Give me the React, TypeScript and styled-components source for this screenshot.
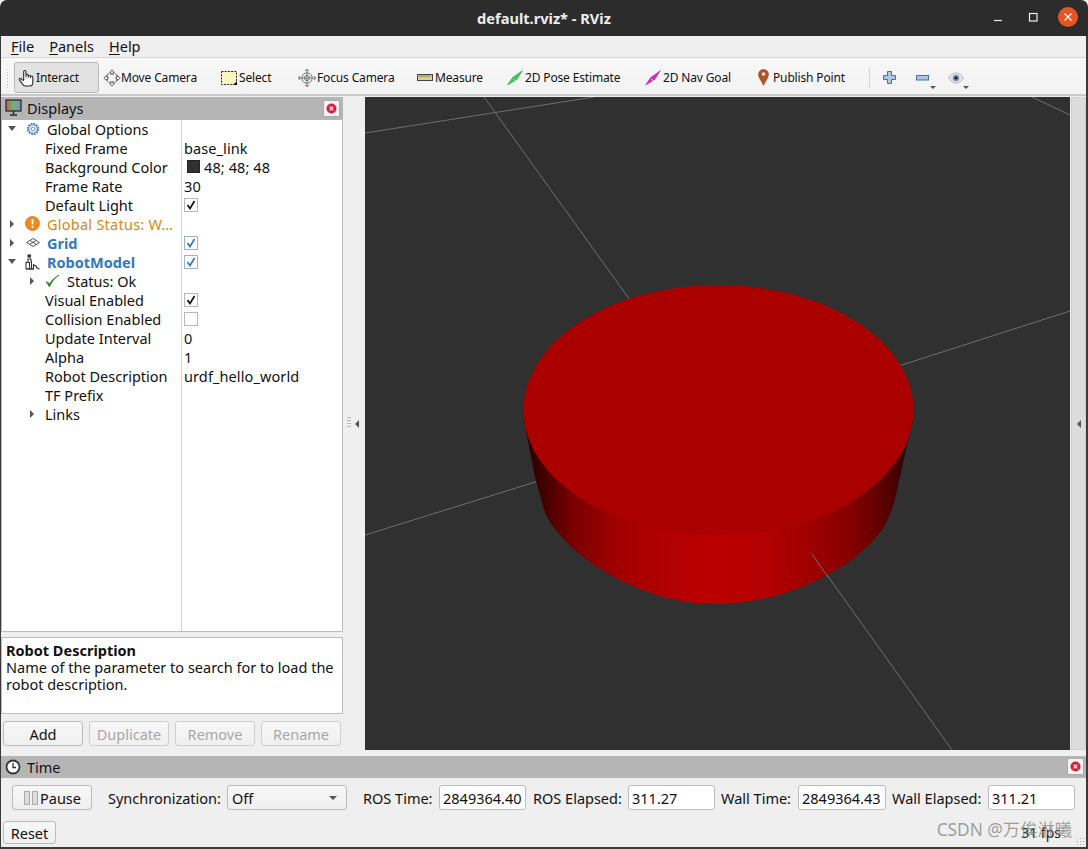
import React from "react";
import styled, { createGlobalStyle } from "styled-components";

const FONT = `"Noto Sans", "Noto Sans CJK SC", sans-serif`;

const Global = createGlobalStyle`
  html, body { margin: 0; padding: 0; background: #fff; overflow: hidden; }
  * { box-sizing: border-box; }
`;

const Win = styled.div`
  width: 1088px; height: 849px; display: flex; flex-direction: column;
  font-family: ${FONT}; font-size: 14.5px; color: #111; background: #efefef;
  position: relative; overflow: hidden;
`;
const TitleBar = styled.div`
  height: 36px; background: #2c2c2c; border-radius: 7px 7px 0 0; color: #eee;
  display: flex; align-items: center; justify-content: center; position: relative;
  font-weight: 700; font-size: 14.6px; flex: none;
`;
const WinButtons = styled.div`
  position: absolute; right: 10px; top: 7px; display: flex; align-items: center; gap: 15px;
`;
const WinBtn = styled.div`
  width: 20px; height: 20px; display: flex; align-items: center; justify-content: center;
`;
const Close = styled(WinBtn)`
  background: #e95420; border-radius: 50%;
`;
const Frame = styled.div`
  flex: 1; display: flex; flex-direction: column; min-height: 0;
  border-left: 1px solid #3a3a3a; border-right: 2px solid #3a3a3a; border-bottom: 2px solid #3a3a3a;
`;
const MenuBar = styled.div`
  height: 21px; display: flex; align-items: center; gap: 15px; padding: 0 0 1px 10px;
  background: #efefef; font-size: 14.5px; flex: none;
`;
const MenuItem = styled.span`
  u { text-decoration-thickness: 1px; text-underline-offset: 2px; }
`;
const ToolBar = styled.div`
  height: 39px; display: flex; align-items: center; flex: none; margin-bottom: 1px;
  background: linear-gradient(#f8f8f8, #f3f3f3);
  border-top: 1px solid #d6d6d6; border-bottom: 2px solid #c9c9c9;
  padding: 3px 0 0 5px; font-size: 12px;
`;
const Grip = styled.div`
  width: 4px; height: 20px; margin-right: 4px;
  background-image: radial-gradient(#bbb 0.7px, transparent 0.8px);
  background-size: 3px 3px;
`;
const Tool = styled.div<{ $w: number; $gap: number; $active?: boolean }>`
  width: ${(p) => p.$w}px; height: 31px; display: flex; align-items: center; gap: ${(p) => p.$gap}px;
  padding-left: 3px; white-space: nowrap; border-radius: 3px; letter-spacing: -0.15px;
  border: 1px solid ${(p) => (p.$active ? "#b9b9b9" : "transparent")};
  background: ${(p) => (p.$active ? "#e2e2e2" : "transparent")};
  svg { flex: none; }
`;
const ToolSep = styled.div`
  width: 1px; height: 20px; background: #d5d5d5; margin: 0 13px 0 0;
`;
const IconTool = styled.div<{ $w: number }>`
  width: ${(p) => p.$w}px; height: 31px; display: flex; align-items: center; padding-left: 0; position: relative;
`;
const Drop = styled.span`
  position: absolute; right: 12px; bottom: 4px; width: 0; height: 0;
  border-left: 3px solid transparent; border-right: 3px solid transparent; border-top: 3px solid #555;
`;
const EyeDrop = styled(Drop)`
  right: 7px;
`;
const Middle = styled.div`
  flex: none; height: 653px; display: flex;
`;
const LeftCol = styled.div`
  width: 342px; display: flex; flex-direction: column; flex: none; padding-bottom: 4px;
`;
const DockHeader = styled.div`
  height: 23px; background: #b5b5b5; display: flex; align-items: center; flex: none;
  padding: 0 3px 1px 4px; gap: 4px; font-size: 14.5px;
`;
const DockTitle = styled.span`
  flex: 1;
`;
const DockClose = styled.div`
  width: 17px; height: 17px; background: #f4f4f4; border: 1px solid #aaa; border-radius: 2px;
  display: flex; align-items: center; justify-content: center;
`;
const Tree = styled.div`
  flex: 1; min-height: 0; background: #fff; border: 1px solid #bdbdbd; border-top: 0; position: relative;
`;
const ColLine = styled.div`
  position: absolute; left: 179px; top: 0; bottom: 0; width: 1px; background: #d4d4d4;
`;
const Row = styled.div`
  height: 19px; display: flex; align-items: center; position: relative; white-space: nowrap; padding-bottom: 2px;
`;
const NameCell = styled.div<{ $indent: number }>`
  width: 180px; flex: none; display: flex; align-items: center; padding-left: ${(p) => p.$indent}px;
  overflow: hidden;
`;
const ValueCell = styled.div`
  flex: 1; display: flex; align-items: center; padding-left: 2px; gap: 4px; letter-spacing: 0.1px;
`;
const Expander = styled.span<{ $open?: boolean; $x: number }>`
  position: absolute; left: ${(p) => p.$x}px; top: 5px; width: 0; height: 0;
  ${(p) =>
    p.$open
      ? "border-left: 4px solid transparent; border-right: 4px solid transparent; border-top: 5px solid #555; margin-top: 1px;"
      : "border-top: 4px solid transparent; border-bottom: 4px solid transparent; border-left: 4px solid #555;"}
`;
const IconSlot = styled.span<{ $x: number }>`
  position: absolute; left: ${(p) => p.$x}px; top: 0; width: 17px; height: 17px;
  display: flex; align-items: center; justify-content: center;
`;
const Name = styled.span<{ $tone?: string }>`
  color: ${(p) => (p.$tone === "warn" ? "#d58a12" : p.$tone === "blue" ? "#2f78c4" : "#111")};
  font-weight: ${(p) => (p.$tone === "blue" ? 700 : 400)};
  letter-spacing: ${(p) => (p.$tone === "warn" ? "0.25px" : "0")};
`;
const Check = styled.span<{ $blue?: boolean }>`
  width: 14px; height: 14px; border: 1px solid #b8b8b8; background: #fff; display: flex;
  align-items: center; justify-content: center;
  border-color: ${(p) => (p.$blue ? "#9db4cc" : "#b8b8b8")};
`;
const Swatch = styled.span`
  width: 13px; height: 13px; background: #303030; border: 1px solid #222; margin-left: 3px;
`;
const Dots = styled.div`
  height: 5px; display: flex; justify-content: center; align-items: center; flex: none;
  &::before {
    content: ""; width: 16px; height: 2px;
    background-image: radial-gradient(#b5b5b5 0.6px, transparent 0.7px); background-size: 3px 2px;
  }
`;
const Desc = styled.div`
  height: 77px; background: #fff; border: 1px solid #bdbdbd; padding: 4px 4px; line-height: 17px;
  font-size: 14.5px; flex: none;
`;
const DescTitle = styled.div`
  font-weight: 700;
`;
const BtnRow = styled.div`
  display: flex; gap: 6px; padding: 7px 0 0 2px; flex: none;
`;
const Btn = styled.div<{ $w: number; $h?: number; $off?: boolean }>`
  width: ${(p) => p.$w}px; height: ${(p) => p.$h ?? 25}px; border: 1px solid #bcbcbc; border-radius: 3px;
  background: linear-gradient(#f7f7f7, #f0f0f0); display: flex; align-items: center; justify-content: center;
  color: ${(p) => (p.$off ? "#a8a8a8" : "#111")}; gap: 1px; flex: none;
  border-color: ${(p) => (p.$off ? "#cfcfcf" : "#bcbcbc")};
`;
const SideHandle = styled.div`
  width: 22px; flex: none; display: flex; align-items: center; justify-content: flex-end; padding-right: 6px;
  position: relative;
`;
const HandleDots = styled.span`
  position: absolute; left: 4px; top: 319px; width: 4px; height: 12px;
  background-image: radial-gradient(#b5b5b5 0.6px, transparent 0.7px); background-size: 2px 3px;
`;
const ArrowLeft = styled.span`
  width: 0; height: 0; border-top: 4px solid transparent; border-bottom: 4px solid transparent;
  border-right: 4px solid #555;
`;
const Viewport = styled.div`
  width: 705px; flex: none; background: #303030; height: 653px;
  svg { display: block; }
`;
const RightStrip = styled.div`
  flex: 1; background: #dcdcdc; margin: 0 0 0 1px; display: flex; align-items: center; justify-content: center;
  border: 1px solid #cfcfcf; border-radius: 2px 2px 0 0;
`;
const Split = styled(Dots)`
  height: 6px;
`;
const TimeHeader = styled(DockHeader)`
  height: 22px; padding-right: 2px; gap: 6px;
`;
const TimeRow = styled.div`
  display: flex; align-items: center; padding: 7px 0 0 11px; height: 32px; flex: none; font-size: 14.5px;
`;
const Label = styled.span<{ $w: number; $ml?: number }>`
  width: ${(p) => p.$w}px; flex: none; margin-left: ${(p) => p.$ml ?? 0}px; white-space: nowrap;
`;
const Combo = styled.div`
  width: 120px; height: 25px; border: 1px solid #bcbcbc; border-radius: 3px; background: linear-gradient(#f7f7f7, #f0f0f0);
  display: flex; align-items: center; justify-content: space-between; padding: 0 9px 0 4px; flex: none;
`;
const ComboArrow = styled.span`
  width: 0; height: 0; border-left: 4px solid transparent; border-right: 4px solid transparent; border-top: 4px solid #555;
`;
const Input = styled.div<{ $w: number }>`
  width: ${(p) => p.$w}px; height: 25px; background: #fff; border: 1px solid #bcbcbc; border-radius: 3px; flex: none;
  display: flex; align-items: center; padding-left: 3px; overflow: hidden;
`;
const BottomRow = styled.div`
  flex: 1; display: flex; align-items: flex-end; justify-content: space-between; padding: 0 25px 3px 2px; position: relative;
`;
const Fps = styled.span`
  margin-bottom: 2px; font-size: 14px;
`;
const Watermark = styled.span`
  position: absolute; right: 14px; bottom: 6px; font-size: 17.3px; color: rgba(130,130,130,0.75); white-space: nowrap;
`;
const SizeGrip = styled.span`
  position: absolute; right: 1px; bottom: 1px; width: 9px; height: 9px;
  background-image: radial-gradient(#aaa 0.6px, transparent 0.7px); background-size: 3px 3px;
`;

const HandIcon = () => (
  <svg width="18" height="20" viewBox="0 0 19 20">
    <path d="M6 12V3.2a1.2 1.2 0 0 1 2.4 0V9M8.4 8.5V7.2a1.2 1.2 0 0 1 2.4 0V9.5M10.8 8.5a1.2 1.2 0 0 1 2.4 0V10M13.2 9a1.2 1.2 0 0 1 2.4 0v5.5c0 2.5-1.2 4-3 4H7.500c-1.3 0-2-1-3-2.5L1.500 12c-.7-1 .6-2.2 1.600-1.200L6 13" fill="#fff" stroke="#222" strokeWidth="1.1" strokeLinejoin="round" />
  </svg>
);
const MoveIcon = () => (
  <svg width="18" height="18" viewBox="0 0 18 18" fill="#fff" stroke="#666" strokeWidth="1">
    <path d="M9 .8 11.5 3.5H10.2V5H7.8V3.5H6.5ZM9 17.2 6.5 14.5H7.8V13H10.2V14.5H11.5ZM.8 9 3.5 6.5V7.8H5V10.2H3.5V11.5ZM17.2 9 14.5 11.5V10.2H13V7.8H14.5V6.5Z" />
    <rect x="4.5" y="5" width="9" height="8" fill="none" strokeDasharray="1.5 1" />
  </svg>
);
const SelectIcon = () => (
  <svg width="17" height="16" viewBox="0 0 17 16">
    <rect x="0.5" y="1.5" width="15" height="13" fill="#fbf6c0" stroke="#222" strokeDasharray="2 1.2" />
    <path d="M16 11v4h-4Z" fill="#111" />
  </svg>
);
const FocusIcon = () => (
  <svg width="18" height="18" viewBox="0 0 18 18" fill="none" stroke="#777" strokeWidth="1">
    <circle cx="9" cy="9" r="5.2" fill="#f4f4f4" />
    <circle cx="9" cy="9" r="2.6" />
    <path d="M9 .5V17.5M.5 9H17.5" />
    <path d="M7 2 9 .3 11 2M7 16 9 17.7 11 16M2 7 .3 9 2 11M16 7 17.7 9 16 11" />
  </svg>
);
const RulerIcon = () => (
  <svg width="16" height="8" viewBox="0 0 16 8">
    <rect x="0.5" y="0.5" width="15" height="6" fill="#dccf8e" stroke="#444" />
    <path d="M3 1v2.5M5 1v2M7 1v2.5M9 1v2M11 1v2.5M13 1v2" stroke="#665" strokeWidth="0.7" />
  </svg>
);
const PoseIcon = ({ c }: { c: string }) => (
  <svg width="16" height="16" viewBox="0 0 16 16">
    <path d="M.5 15 5 8.500 7.500 11Z" fill={c} stroke="#222" strokeWidth="0.3" />
    <path d="M5 8 15.500 .5 9 10.500 7 9Z" fill={c} stroke="#222" strokeWidth="0.3" />
  </svg>
);
const PinIcon = () => (
  <svg width="11" height="17" viewBox="0 0 11 17">
    <path d="M5.500.5C2.500.5.500 2.700.500 5.500c0 3.200 3 6.300 5 11 2-4.700 5-7.800 5-11C10.500 2.700 8.500.500 5.500.500Z" fill="#b5522b" stroke="#8c3c1c" strokeWidth="0.5" />
    <circle cx="5.500" cy="5" r="1.800" fill="#f3e7d8" />
  </svg>
);
const PlusIcon = () => (
  <svg width="13" height="13" viewBox="0 0 13 13">
    <path d="M4.500.5h4v4h4v4h-4v4h-4v-4h-4v-4h4Z" fill="#a9c6e6" stroke="#3f72ad" />
  </svg>
);
const MinusIcon = () => (
  <svg width="13" height="6" viewBox="0 0 13 6">
    <rect x="0.5" y="0.5" width="12" height="4.500" fill="#a9c6e6" stroke="#3f72ad" />
  </svg>
);
const EyeIcon = () => (
  <svg width="16" height="12" viewBox="0 0 16 12">
    <path d="M.5 6C3 2 5.500 1 8 1s5 1 7.500 5C13 10 10.500 11 8 11S3 10 .5 6Z" fill="#dfe3ea" stroke="#b8bcc4" />
    <circle cx="8" cy="6" r="3.200" fill="#7d8fb0" />
    <circle cx="8" cy="6" r="1.600" fill="#161d33" />
  </svg>
);
const MonitorIcon = () => (
  <svg width="18" height="18" viewBox="0 0 18 18">
    <defs>
      <linearGradient id="scr" x1="0" x2="1">
        <stop offset="0" stopColor="#c46060" />
        <stop offset="0.5" stopColor="#6fb56f" />
        <stop offset="1" stopColor="#7f86cc" />
      </linearGradient>
    </defs>
    <rect x="1" y="1" width="15" height="11" fill="url(#scr)" stroke="#222" strokeWidth="1.200" />
    <path d="M8.500 12v3M5 16h7" stroke="#222" strokeWidth="1.500" />
  </svg>
);
const CloseDot = () => (
  <svg width="11" height="11" viewBox="0 0 11 11">
    <circle cx="5.500" cy="5.500" r="5" fill="#d81f3c" />
    <path d="M3.700 3.700l3.600 3.600M7.300 3.700 3.700 7.300" stroke="#fff" strokeWidth="1.200" />
  </svg>
);
const ClockIcon = () => (
  <svg width="16" height="16" viewBox="0 0 16 16">
    <circle cx="8" cy="8" r="6.500" fill="#fff" stroke="#333" strokeWidth="1.800" />
    <path d="M8 4v4.500h3" fill="none" stroke="#333" strokeWidth="1.300" />
  </svg>
);
const GearIcon = () => (
  <svg width="14" height="14" viewBox="0 0 14 14">
    <circle cx="7" cy="7" r="5" fill="#c4d8f0" stroke="#4d7fc0" strokeWidth="2.400" strokeDasharray="1.600 1" />
    <circle cx="7" cy="7" r="4.300" fill="#dce8f6" stroke="#5c8ac6" strokeWidth="0.800" />
    <circle cx="7" cy="7" r="1.800" fill="#fff" stroke="#5c8ac6" strokeWidth="0.800" />
  </svg>
);
const WarnIcon = () => (
  <svg width="15" height="15" viewBox="0 0 15 15">
    <circle cx="7.500" cy="7.500" r="7" fill="#f08a1e" stroke="#d8741a" strokeWidth="0.800" />
    <rect x="6.700" y="3" width="1.700" height="5.500" fill="#fff" />
    <rect x="6.700" y="10" width="1.700" height="1.700" fill="#fff" />
  </svg>
);
const GridIcon = () => (
  <svg width="14" height="9" viewBox="0 0 14 9" fill="none" stroke="#444" strokeWidth="0.900">
    <path d="M7 .5 13.500 4.500 7 8.500 .5 4.500Z" />
    <path d="M4 2.500 10.500 6.500M10 2.500 3.500 6.500" />
  </svg>
);
const RobotIcon = () => (
  <svg width="16" height="16" viewBox="0 0 16 16" fill="none" stroke="#333" strokeWidth="1.100">
    <rect x="3" y="1" width="2.500" height="2" fill="#333" />
    <path d="M1 15V8.500h3.500V15M3 8.500V5h3v3" />
    <path d="M6.500 15V7M8.500 15v-5M8.500 11c2 0 3 1 3.500 3l2.500 1" />
    <path d="M1 15h8" strokeWidth="1.500" />
  </svg>
);
const GreenTick = () => (
  <svg width="15" height="14" viewBox="0 0 15 14">
    <path d="M1 7.500 4.500 13C6.500 8.500 9.500 4 14 1 9.500 3.500 6.700 6.500 4.700 9.500Z" fill="#2f7d2f" stroke="#2f7d2f" strokeWidth="0.600" />
  </svg>
);
const CheckMark = ({ c }: { c: string }) => (
  <svg width="10" height="10" viewBox="0 0 10 10">
    <path d="M1.500 5 4 8.500 8.500 1" fill="none" stroke={c} strokeWidth="1.700" />
  </svg>
);

const Scene = () => (
  <svg width="705" height="653" viewBox="365 97 705 653">
    <defs>
      <linearGradient id="side" gradientUnits="userSpaceOnUse" x1="524" y1="0" x2="913" y2="0">
        <stop offset="0" stopColor="#200000" />
        <stop offset="0.06" stopColor="#4a0000" />
        <stop offset="0.13" stopColor="#7c0000" />
        <stop offset="0.25" stopColor="#a40000" />
        <stop offset="0.38" stopColor="#b30000" />
        <stop offset="0.5" stopColor="#bb0000" />
        <stop offset="0.62" stopColor="#b40000" />
        <stop offset="0.72" stopColor="#a20000" />
        <stop offset="0.84" stopColor="#860000" />
        <stop offset="0.93" stopColor="#580000" />
        <stop offset="1" stopColor="#200000" />
      </linearGradient>
    </defs>
    <g stroke="#6e6e6e" strokeWidth="1" fill="none">
      <path d="M365 133 594 97" />
      <path d="M484 97 630 300" />
      <path d="M880 372 1070 311" />
      <path d="M365 535 545 479" />
      <path d="M1032 97 1070 115" />
      <path d="M812 554 952 750" />
    </g>
    <path d="M524 420 L535 477 L545 513 C565 555 640 604 715 604 C790 604 860 565 885 525 Q893 510 897 490 L908 440 L913 420 Z" fill="url(#side)" />
    <path d="M812 554 L828 577" stroke="#6e6e6e" fill="none" />
    <ellipse cx="718.500" cy="410" rx="195" ry="125" fill="#aa0000" />
  </svg>
);

const row = (
  indent: number,
  name: React.ReactNode,
  value?: React.ReactNode,
  extras?: React.ReactNode,
  tone?: string
) => ({ indent, name, value, extras, tone });

const rows = [
  row(45, "Global Options", null, <><Expander $open $x={6} /><IconSlot $x={22}><GearIcon /></IconSlot></>),
  row(43, "Fixed Frame", "base_link"),
  row(43, "Background Color", <><Swatch />48; 48; 48</>),
  row(43, "Frame Rate", "30"),
  row(43, "Default Light", <Check><CheckMark c="#111" /></Check>),
  row(45, "Global Status: W…", null, <><Expander $x={8} /><IconSlot $x={22}><WarnIcon /></IconSlot></>, "warn"),
  row(45, "Grid", <Check $blue><CheckMark c="#2f78c4" /></Check>, <><Expander $x={8} /><IconSlot $x={22}><GridIcon /></IconSlot></>, "blue"),
  row(45, "RobotModel", <Check $blue><CheckMark c="#2f78c4" /></Check>, <><Expander $open $x={6} /><IconSlot $x={22}><RobotIcon /></IconSlot></>, "blue"),
  row(65, "Status: Ok", null, <><Expander $x={28} /><IconSlot $x={42}><GreenTick /></IconSlot></>),
  row(43, "Visual Enabled", <Check><CheckMark c="#111" /></Check>),
  row(43, "Collision Enabled", <Check />),
  row(43, "Update Interval", "0"),
  row(43, "Alpha", "1"),
  row(43, "Robot Description", "urdf_hello_world"),
  row(43, "TF Prefix"),
  row(43, "Links", null, <Expander $x={28} />),
];

export default function App() {
  return (
    <Win>
      <Global />
      <TitleBar>
        default.rviz* - RViz
        <WinButtons>
          <WinBtn>
            <svg width="10" height="10" viewBox="0 0 10 10"><path d="M1 8.500h8" stroke="#eee" strokeWidth="1.200" /></svg>
          </WinBtn>
          <WinBtn>
            <svg width="10" height="10" viewBox="0 0 10 10"><rect x="1.500" y="1.500" width="7.500" height="7.500" fill="none" stroke="#eee" strokeWidth="1.200" /></svg>
          </WinBtn>
          <Close>
            <svg width="10" height="10" viewBox="0 0 10 10"><path d="M1.500 1.500l7 7M8.500 1.500l-7 7" stroke="#fff" strokeWidth="1.200" /></svg>
          </Close>
        </WinButtons>
      </TitleBar>
      <Frame>
        <MenuBar>
          <MenuItem><u>F</u>ile</MenuItem>
          <MenuItem><u>P</u>anels</MenuItem>
          <MenuItem><u>H</u>elp</MenuItem>
        </MenuBar>
        <ToolBar>
          <Grip />
          <Tool $w={85} $gap={0} $active><HandIcon />Interact</Tool>
          <Tool $w={118} $gap={0}><MoveIcon />Move Camera</Tool>
          <Tool $w={77} $gap={1}><SelectIcon />Select</Tool>
          <Tool $w={119} $gap={1}><FocusIcon />Focus Camera</Tool>
          <Tool $w={90} $gap={2}><RulerIcon />Measure</Tool>
          <Tool $w={138} $gap={2}><PoseIcon c="#19e53c" />2D Pose Estimate</Tool>
          <Tool $w={113} $gap={2}><PoseIcon c="#f01ad0" />2D Nav Goal</Tool>
          <Tool $w={115} $gap={4}><PinIcon />Publish Point</Tool>
          <ToolSep />
          <IconTool $w={33}><PlusIcon /></IconTool>
          <IconTool $w={32}><MinusIcon /><Drop /></IconTool>
          <IconTool $w={28}><EyeIcon /><EyeDrop /></IconTool>
        </ToolBar>
        <Middle>
          <LeftCol>
            <DockHeader>
              <MonitorIcon />
              <DockTitle>Displays</DockTitle>
              <DockClose><CloseDot /></DockClose>
            </DockHeader>
            <Tree>
              <ColLine />
              {rows.map((r, i) => (
                <Row key={i}>
                  {r.extras}
                  <NameCell $indent={r.indent}><Name $tone={r.tone}>{r.name}</Name></NameCell>
                  <ValueCell>{r.value}</ValueCell>
                </Row>
              ))}
            </Tree>
            <Dots />
            <Desc>
              <DescTitle>Robot Description</DescTitle>
              Name of the parameter to search for to load the robot description.
            </Desc>
            <BtnRow>
              <Btn $w={80}>Add</Btn>
              <Btn $w={80} $off>Duplicate</Btn>
              <Btn $w={80} $off>Remove</Btn>
              <Btn $w={80} $off>Rename</Btn>
            </BtnRow>
          </LeftCol>
          <SideHandle><HandleDots /><ArrowLeft /></SideHandle>
          <Viewport><Scene /></Viewport>
          <RightStrip><ArrowLeft /></RightStrip>
        </Middle>
        <Split />
        <TimeHeader>
          <ClockIcon />
          <DockTitle>Time</DockTitle>
          <DockClose><CloseDot /></DockClose>
        </TimeHeader>
        <TimeRow>
          <Btn $w={80}>
            <svg width="16" height="14" viewBox="0 0 16 14">
              <rect x="1.500" y="0.500" width="5" height="13" fill="#ddd" stroke="#aaa" />
              <rect x="9.500" y="0.500" width="5" height="13" fill="#ddd" stroke="#aaa" />
            </svg>
            Pause
          </Btn>
          <Label $w={119} $ml={16}>Synchronization:</Label>
          <Combo>Off<ComboArrow /></Combo>
          <Label $w={76} $ml={16}>ROS Time:</Label>
          <Input $w={87}>2849364.40</Input>
          <Label $w={95} $ml={7}>ROS Elapsed:</Label>
          <Input $w={87}>311.27</Input>
          <Label $w={77} $ml={6}>Wall Time:</Label>
          <Input $w={88}>2849364.43</Input>
          <Label $w={96} $ml={6}>Wall Elapsed:</Label>
          <Input $w={87}>311.21</Input>
        </TimeRow>
        <BottomRow>
          <Btn $w={53} $h={23}>Reset</Btn>
          <Fps>31 fps</Fps>
          <Watermark>CSDN @万俟淋曦</Watermark>
          <SizeGrip />
        </BottomRow>
      </Frame>
    </Win>
  );
}
